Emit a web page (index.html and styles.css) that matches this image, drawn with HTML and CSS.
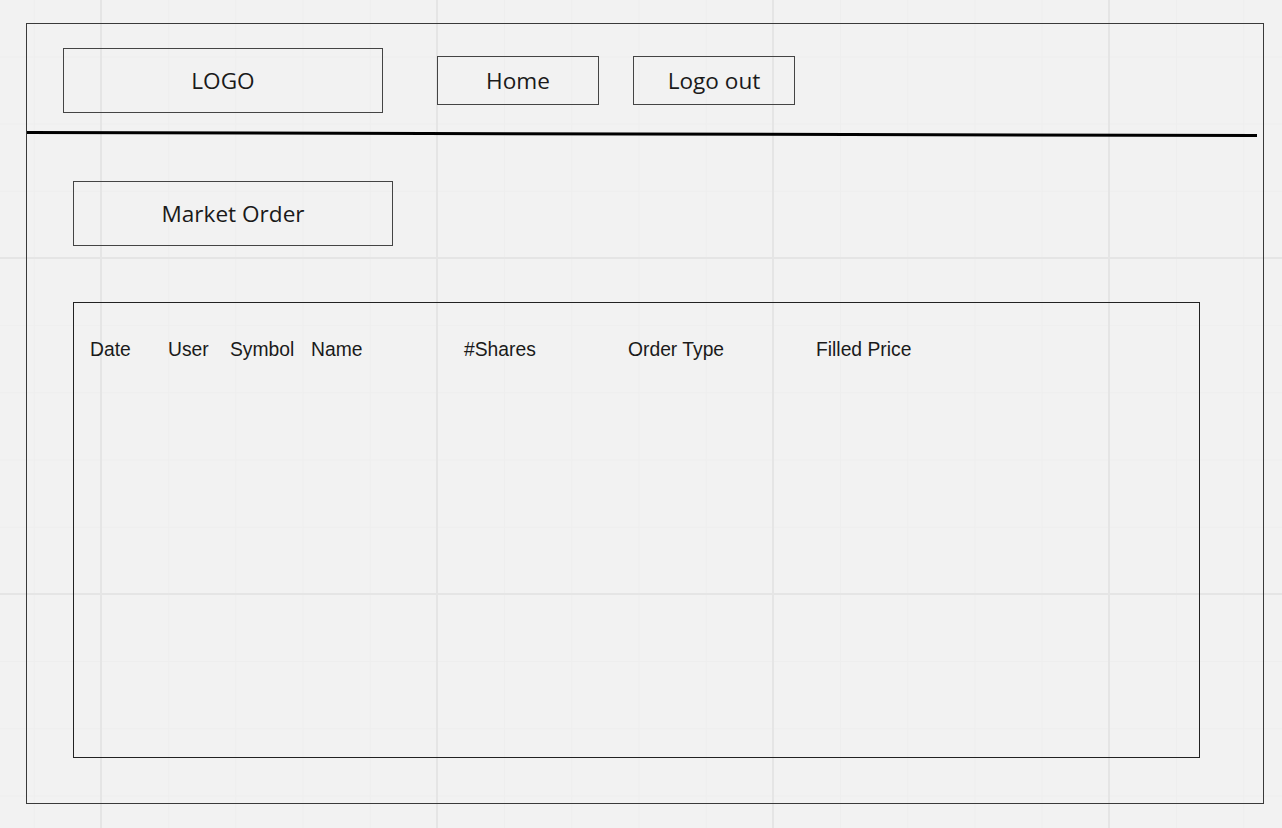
FILE: index.html
```html
<!DOCTYPE html>
<html lang="en">
<head>
<meta charset="utf-8">
<title>Market Order</title>
<link rel="stylesheet" href="styles.css">
</head>
<body>
<div class="frame">
  <header class="header">
    <div class="box logo">LOGO</div>
    <nav class="nav">
      <div class="box nav-btn">Home</div>
      <div class="box nav-btn">Logo out</div>
    </nav>
  </header>
  <div class="divider"></div>
  <div class="box title">Market Order</div>
  <section class="table">
    <div class="thead">
      <span class="c-date">Date</span>
      <span class="c-user">User</span>
      <span class="c-symbol">Symbol</span>
      <span class="c-name">Name</span>
      <span class="c-shares">#Shares</span>
      <span class="c-type">Order Type</span>
      <span class="c-price">Filled Price</span>
    </div>
  </section>
</div>
</body>
</html>
```
FILE: styles.css
```css
html, body {
  margin: 0;
  padding: 0;
}
body {
  width: 1282px;
  height: 828px;
  overflow: hidden;
  background-color: #f2f2f2;
  background-image:
    linear-gradient(to right, #e5e5e5 2px, transparent 2px),
    linear-gradient(to bottom, #e5e5e5 2px, transparent 2px),
    linear-gradient(to right, #eeeeee 1px, transparent 1px),
    linear-gradient(to bottom, #eeeeee 1px, transparent 1px);
  background-size: 336px 100%, 100% 336px, 67.2px 100%, 100% 67.2px;
  background-position: 100px 0, 0 257px, 33.8px 0, 0 56.4px;
}
.frame {
  box-sizing: border-box;
  margin: 23px 0 0 26px;
  width: 1238px;
  height: 781px;
  border: 1px solid #3a3a3a;
  display: flex;
  flex-direction: column;
  font-family: "Open Sans", "Noto Sans", sans-serif;
  color: #1a1a1a;
}
.box {
  box-sizing: border-box;
  border: 1px solid #444;
  display: flex;
  align-items: center;
  justify-content: center;
  font-size: 22.6px;
  line-height: 1;
  padding-top: 2px;
}
.header {
  display: flex;
  align-items: center;
  padding: 24px 0 0 36px;
}
.logo {
  width: 320px;
  height: 65px;
}
.nav {
  display: flex;
  gap: 34px;
  margin-left: 54px;
}
.nav-btn {
  width: 162px;
  height: 49px;
}
.divider {
  margin-top: 18px;
  width: 1230px;
  height: 3px;
  background: #000;
  transform: rotate(0.14deg);
  transform-origin: 0 0;
}
.title {
  margin: 47px 0 0 46px;
  width: 320px;
  height: 65px;
}
.table {
  box-sizing: border-box;
  margin: 56px 63px 0 46px;
  height: 456px;
  border: 1px solid #222;
}
.thead {
  display: flex;
  padding: 36px 0 0 16px;
  font-family: "Liberation Sans", Arial, sans-serif;
  font-size: 19.3px;
  color: #1a1a1a;
}
.thead span { display: block; }
.c-date { width: 78px; }
.c-user { width: 62px; }
.c-symbol { width: 81px; }
.c-name { width: 153px; }
.c-shares { width: 164px; }
.c-type { width: 188px; }
```
